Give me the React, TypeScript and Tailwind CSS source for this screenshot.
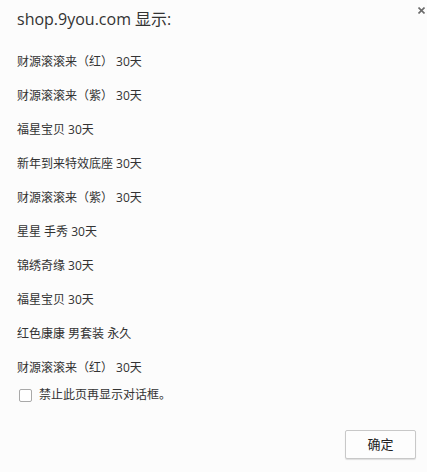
const items = [
   "财源滚滚来（红） 30天",
   "财源滚滚来（紫） 30天",
   "福星宝贝 30天",
   "新年到来特效底座 30天",
   "财源滚滚来（紫） 30天",
   "星星 手秀 30天",
   "锦绣奇缘 30天",
   "福星宝贝 30天",
   "红色康康 男套装 永久",
   "财源滚滚来（红） 30天",
];

const fontStack =
   "font-['Segoe_UI','Open_Sans','Noto_Sans_CJK_SC','Microsoft_YaHei',sans-serif]";

export default function App() {
   return (
      <div
         className={`relative h-[472px] w-[427px] overflow-hidden bg-[#fcfcfc] text-[#333] ${fontStack}`}
      >
         <button
            type="button"
            className="absolute right-[1px] top-[5px] flex h-[10px] w-[10px] items-center justify-center"
            aria-label="close"
         >
            <svg width="7" height="7" viewBox="0 0 7 7">
               <path d="M0.5 0.5 L6.5 6.5 M6.5 0.5 L0.5 6.5" stroke="#6b6b6b" strokeWidth="1.6" />
            </svg>
         </button>

         <div className="pl-[17px]">
            <div className="pt-[9px] text-[16px] leading-[20px] text-[#333]">shop.9you.com 显示:</div>

            <div className="mt-[16px] flex flex-col">
               {items.map((item, i) => (
                  <div key={i} className="flex h-[34px] items-center text-[12px] text-[#333]">
                     {item}
                  </div>
               ))}
            </div>

            <label className="flex h-[20px] items-center gap-[7px] pl-[2px] text-[12px] text-[#333]">
               <span className="block h-[13px] w-[13px] rounded-[2px] border border-[#a9a9a9] bg-white" />
               禁止此页再显示对话框。
            </label>
         </div>

         <div className="mt-[25px] flex justify-end pr-[11px]">
            <button
               type="button"
               className="flex h-[29px] w-[71px] items-center justify-center rounded-[2px] border border-[#c8c8c8] bg-[#fdfdfd] text-[13px] text-[#222] shadow-[0_1px_1px_rgba(0,0,0,0.12)]"
            >
               确定
            </button>
         </div>
      </div>
   );
}
